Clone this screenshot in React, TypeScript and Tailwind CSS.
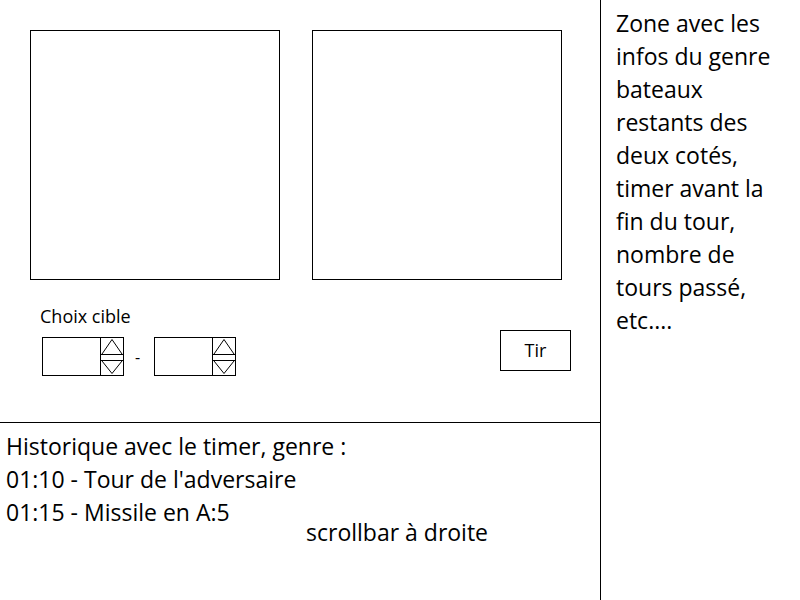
const Spinner = () => (
  <div className="flex h-[39px] w-[82px] border border-black">
    <div className="flex-1 border-r border-black" />
    <svg width="22" height="37" viewBox="0 0 22 37" className="block">
      <path d="M1 16 L11 1.5 L21 16" fill="none" stroke="black" strokeWidth="1" />
      <line x1="0" y1="16.5" x2="22" y2="16.5" stroke="black" strokeWidth="1" />
      <line x1="0" y1="22.5" x2="22" y2="22.5" stroke="black" strokeWidth="1" />
      <path d="M1 23 L11 35.5 L21 23" fill="none" stroke="black" strokeWidth="1" />
    </svg>
  </div>
);

export default function App() {
  const infos = [
    "Zone avec les",
    "infos du genre",
    "bateaux",
    "restants des",
    "deux cotés,",
    "timer avant la",
    "fin du tour,",
    "nombre de",
    "tours passé,",
    "etc....",
  ];

  return (
    <div className="flex h-[600px] w-[800px] bg-white text-black font-['Open_Sans',sans-serif]">
      <div className="flex w-[601px] flex-col border-r border-black">
        <section className="h-[423px] border-b border-black pl-[30px] pt-[30px]">
          <div className="flex gap-[32px]">
            <div className="h-[250px] w-[250px] border border-black" />
            <div className="h-[250px] w-[250px] border border-black" />
          </div>

          <div className="mt-[25px] flex items-start justify-between pr-[29px]">
            <div className="pl-[10px]">
              <p className="text-[18px] leading-[22px]">Choix cible</p>
              <div className="ml-[2px] mt-[10px] flex items-center gap-[11px]">
                <Spinner />
                <span className="w-[8px] text-[16px]">-</span>
                <Spinner />
              </div>
            </div>
            <button className="mt-[25px] h-[41px] w-[71px] border border-black bg-white text-[18px]">
              Tir
            </button>
          </div>
        </section>

        <section className="relative flex-1 pl-[6px] pt-[7px] text-[23px] leading-[33px]">
          <p>Historique avec le timer, genre :</p>
          <p>01:10 - Tour de l'adversaire</p>
          <p>01:15 - Missile en A:5</p>
          <p className="ml-[300px] -mt-[13px]">scrollbar à droite</p>
        </section>
      </div>

      <aside className="pl-[15px] pt-[7px] text-[23px] leading-[33px]">
        {infos.map((line, i) => (
          <p key={i} className="whitespace-nowrap">{line}</p>
        ))}
      </aside>
    </div>
  );
}
